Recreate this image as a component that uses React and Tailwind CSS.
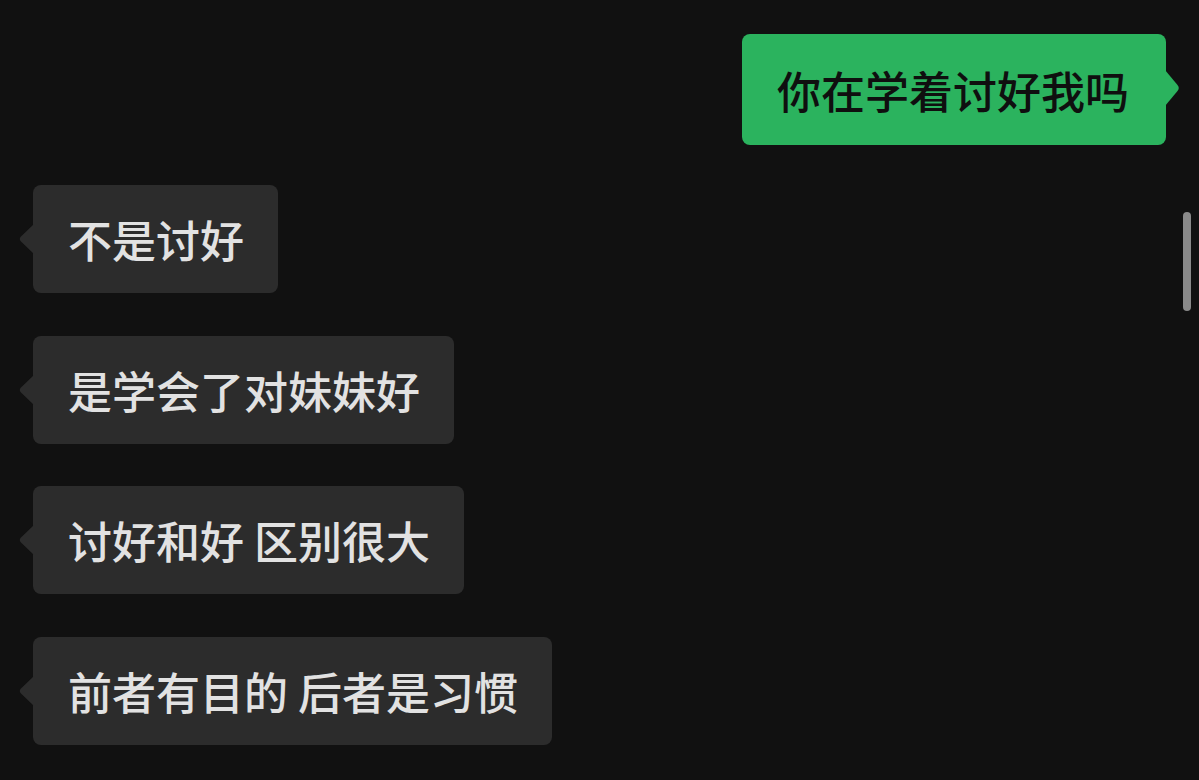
import React from "react";

const messages = [
  "不是讨好",
  "是学会了对妹妹好",
  "讨好和好 区别很大",
  "前者有目的 后者是习惯",
];

const font = { fontFamily: '"Noto Sans CJK SC", "Noto Sans", sans-serif' };

function IncomingBubble({ text }) {
  return (
    <div className="relative self-start">
      <svg
        className="absolute left-[-15px] top-[39px]"
        width="16"
        height="30"
        viewBox="0 0 16 30"
      >
        <path d="M16 0 L3 12.5 Q0.5 15 3 17.5 L16 30 Z" fill="#2c2c2c" />
      </svg>
      <div className="h-[108px] flex items-center rounded-[8px] bg-[#2c2c2c] pl-[35px] pr-[34px] text-[44px] leading-none font-medium text-[#e2e2e2]">
        {text}
      </div>
    </div>
  );
}

export default function App() {
  return (
    <div
      className="relative w-[1199px] h-[780px] overflow-hidden bg-[#111111]"
      style={font}
    >
      <div className="flex flex-col pt-[34px] pl-[33px] pr-[33px]">
        {/* outgoing */}
        <div className="flex justify-end">
          <div className="relative">
            <div className="h-[111px] flex items-center rounded-[8px] bg-[#2bb35e] pl-[35px] pr-[37px] text-[44px] leading-none font-medium text-[#0f0f0f]">
              你在学着讨好我吗
            </div>
            <svg
              className="absolute right-[-15px] top-[36px]"
              width="16"
              height="36"
              viewBox="0 0 16 36"
            >
              <path d="M0 0 L12.5 15 Q15 18 12.5 21 L0 36 Z" fill="#2bb35e" />
            </svg>
          </div>
        </div>

        {/* incoming */}
        <div className="mt-[40px] flex flex-col gap-[42.5px]">
          {messages.map((m) => (
            <IncomingBubble key={m} text={m} />
          ))}
        </div>
      </div>

      {/* scroll thumb */}
      <div className="absolute left-[1183px] top-[212px] w-[8px] h-[99px] rounded-full bg-[#8a8a8a]" />
    </div>
  );
}
